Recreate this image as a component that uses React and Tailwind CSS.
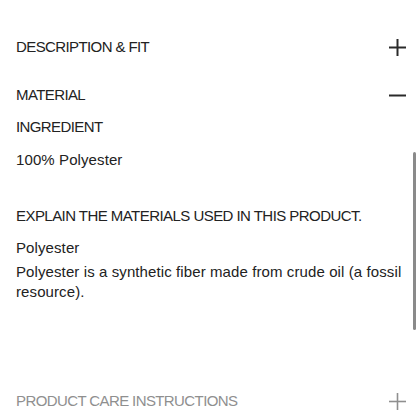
function ToggleIcon({ open, muted }) {
  return (
    <svg
      width="17"
      height="17"
      viewBox="0 0 17 17"
      className={muted ? 'mr-[-2px] text-[#8f8f8f]' : 'mr-[-2px] text-[#2a2a2a]'}
      stroke="currentColor"
      strokeWidth={muted ? 1.6 : 2}
      fill="none"
    >
      <line x1="0" y1="8.5" x2="17" y2="8.5" />
      {!open && <line x1="8.5" y1="0" x2="8.5" y2="17" />}
    </svg>
  )
}

function SectionHeader({ title, open, muted }) {
  return (
    <div className="flex h-12 items-center justify-between">
      <span className={muted ? 'tracking-[-0.6px] text-[#8f8f8f]' : 'tracking-[-0.6px] text-[#222]'}>
        {title}
      </span>
      <ToggleIcon open={open} muted={muted} />
    </div>
  )
}

export default function App() {
  return (
    <div className="relative h-[420px] w-[420px] overflow-hidden bg-white font-['Liberation_Sans',Arial,sans-serif] text-[15px] leading-5 text-[#222]">
      <div className="px-4 pt-[23px]">
        <SectionHeader title="DESCRIPTION & FIT" />
        <SectionHeader title="MATERIAL" open />

        <div className="-mt-[2px]">
          <p className="tracking-[-0.6px]">INGREDIENT</p>
          <p className="mt-[13px] tracking-[0.1px]">100% Polyester</p>
          <p className="mt-[36px] tracking-[-0.55px]">EXPLAIN THE MATERIALS USED IN THIS PRODUCT.</p>
          <p className="mt-3 tracking-[0.1px]">Polyester</p>
          <p className="mt-1 mr-[-4px] tracking-[0.1px]">
            Polyester is a synthetic fiber made from crude oil (a fossil resource).
          </p>
        </div>

        <div className="mt-[75px]">
          <SectionHeader title="PRODUCT CARE INSTRUCTIONS" muted />
        </div>
      </div>

      {/* scroll indicator */}
      <div className="absolute right-[4px] top-[152px] h-[178px] w-[3px] rounded-full bg-[#8a8a8a]" />
    </div>
  )
}
